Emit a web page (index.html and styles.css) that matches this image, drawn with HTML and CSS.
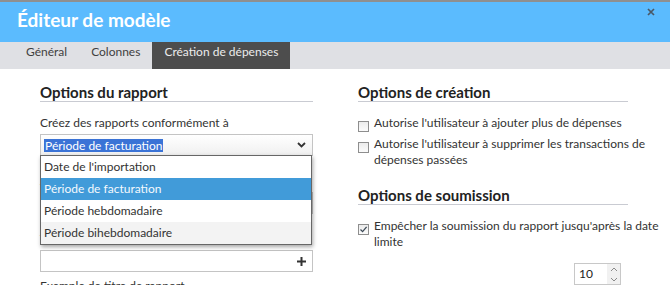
FILE: index.html
```html
<!DOCTYPE html>
<html lang="fr">
<head>
    <meta charset="UTF-8">
    <title>Éditeur de modèle</title>
    <link rel="stylesheet" href="styles.css">
</head>
<body>
    <div class="dialog">
        <div class="titlebar">
            <h1>Éditeur de modèle</h1>
            <button class="close" type="button">
                <svg width="8" height="8" viewBox="0 0 8 8"><path d="M1 1 L7 7 M7 1 L1 7" stroke="#4a5866" stroke-width="1.7"/></svg>
            </button>
        </div>
        <div class="tabs">
            <span class="tab">Général</span>
            <span class="tab">Colonnes</span>
            <span class="tab active">Création de dépenses</span>
        </div>
        <div class="content">
            <div class="col col-left">
                <h2>Options du rapport</h2>
                <div class="field">
                    <label class="field-label">Créez des rapports conformément à</label>
                    <div class="select-wrap">
                        <div class="select">
                            <span class="sel-text">Période de facturation</span>
                            <svg width="9" height="6" viewBox="0 0 9 6"><path d="M1 1 L4.5 4.5 L8 1" fill="none" stroke="#333" stroke-width="1.8"/></svg>
                        </div>
                        <ul class="dropdown">
                            <li>Date de l'importation</li>
                            <li class="active">Période de facturation</li>
                            <li>Période hebdomadaire</li>
                            <li class="alt">Période bihebdomadaire</li>
                        </ul>
                    </div>
                </div>
                <div class="field">
                    <label class="field-label">Jour de début de la période</label>
                    <div class="select"><span>Lundi</span></div>
                </div>
                <div class="field">
                    <label class="field-label">Titre du rapport</label>
                    <div class="input-plus">
                        <svg width="9" height="9" viewBox="0 0 9 9"><path d="M4.5 0 V9 M0 4.5 H9" stroke="#333" stroke-width="2"/></svg>
                    </div>
                </div>
                <div class="field example">
                    <label class="field-label">Exemple de titre de rapport</label>
                </div>
            </div>
            <div class="col col-right">
                <h2>Options de création</h2>
                <div class="check">
                    <span class="box"></span>
                    <span>Autorise l'utilisateur à ajouter plus de dépenses</span>
                </div>
                <div class="check">
                    <span class="box"></span>
                    <span>Autorise l'utilisateur à supprimer les transactions de dépenses passées</span>
                </div>
                <h2 class="section-2">Options de soumission</h2>
                <div class="check">
                    <span class="box checked">
                        <svg width="9" height="9" viewBox="0 0 9 9"><path d="M1.5 4.5 L3.6 6.6 L7.6 1.8" fill="none" stroke="#3d4a57" stroke-width="1.3"/></svg>
                    </span>
                    <span>Empêcher la soumission du rapport jusqu'après la date limite</span>
                </div>
                <div class="spin">
                    <span class="spin-value">10</span>
                    <span class="spin-arrows">
                        <svg width="8" height="5" viewBox="0 0 8 5"><path d="M1 4 L4 1 L7 4" fill="none" stroke="#8a8a8a" stroke-width="1"/></svg>
                        <svg width="8" height="5" viewBox="0 0 8 5"><path d="M1 1 L4 4 L7 1" fill="none" stroke="#8a8a8a" stroke-width="1"/></svg>
                    </span>
                </div>
            </div>
        </div>
    </div>
</body>
</html>
```

FILE: styles.css
```css
body {
    margin: 0;
    font-family: Lato, "Open Sans", sans-serif;
    font-size: 12px;
    color: #333;
    background-color: #fff;
}
.dialog {
    width: 670px;
    height: 285px;
    overflow: hidden;
}
.titlebar {
    display: flex;
    justify-content: space-between;
    height: 40px;
    background-color: #5bbbfe;
    border-top: 2px solid #8f8f8f;
}
.titlebar h1 {
    margin: 0 0 0 17px;
    font-size: 19px;
    line-height: 36px;
    font-weight: 700;
    color: #fff;
}
.close {
    display: block;
    width: 8px;
    height: 8px;
    margin: 6px 15px 0 0;
    padding: 0;
    border: none;
    background: none;
}
.close svg {
    display: block;
}
.tabs {
    display: flex;
    height: 27px;
    padding-left: 14px;
    background-color: #dfe0e4;
}
.tab {
    padding: 0 12px;
    line-height: 20px;
    color: #3f3f3f;
}
.tab.active {
    background-color: #4d4d4d;
    color: #ececec;
}
.content {
    display: flex;
    gap: 45px;
    padding: 14px 0 0 40px;
}
.col-left {
    width: 273px;
}
.col-right {
    width: 302px;
}
h2 {
    margin: 0;
    font-size: 15px;
    line-height: 18px;
    font-weight: 700;
    color: #222;
    border-bottom: 1px solid #c9cbd2;
}
.col-right h2 {
    margin-right: 32px;
}
.col-right h2.section-2 {
    margin-top: 18px;
}
.field-label {
    display: block;
    line-height: 16px;
}
.field {
    margin-top: 13px;
}
.field + .field {
    margin-top: 17px;
}
.field.example {
    margin-top: 6px;
}
.select-wrap {
    position: relative;
}
.select, .input-plus {
    display: flex;
    align-items: center;
    justify-content: space-between;
    box-sizing: border-box;
    height: 22px;
    margin-top: 3px;
    padding: 0 6px 0 3px;
    border: 1px solid #c4c4c4;
    background: linear-gradient(#fff, #f0f0f0);
}
.input-plus {
    justify-content: flex-end;
    background: #fff;
    padding-right: 6px;
}
.sel-text {
    padding: 0 1px;
    line-height: 13px;
    background-color: #3a73d6;
    color: #fff;
}
.dropdown {
    position: absolute;
    top: 21px;
    left: 0;
    right: 1px;
    z-index: 2;
    margin: 0;
    padding: 0;
    list-style: none;
    border: 1px solid #676767;
    background-color: #fff;
    box-shadow: 1px 2px 4px rgba(0, 0, 0, 0.35);
}
.dropdown li {
    height: 22px;
    line-height: 22px;
    padding-left: 3px;
}
.dropdown li.active {
    background-color: #419bd9;
    color: #f4f9fd;
}
.dropdown li.alt {
    background-color: #f3f3f3;
}
.check {
    display: flex;
    align-items: flex-start;
    margin-top: 13px;
    line-height: 16px;
}
.check + .check {
    margin-top: 4px;
}
.box {
    flex: none;
    display: flex;
    align-items: center;
    justify-content: center;
    box-sizing: border-box;
    width: 11px;
    height: 11px;
    margin: 6px 5px 0 0;
    border: 1px solid #8e8e8e;
    background: linear-gradient(#ececec, #fbfbfb);
}
.box svg {
    display: block;
}
.spin {
    display: flex;
    box-sizing: border-box;
    width: 47px;
    height: 22px;
    margin: 13px 0 0 216px;
    border: 1px solid #c8c8c8;
    background-color: #fff;
}
.spin-value {
    flex: 1;
    padding-left: 4px;
    line-height: 20px;
    color: #222;
}
.spin-arrows {
    display: flex;
    flex-direction: column;
    justify-content: space-around;
    align-items: center;
    width: 13px;
    background-color: #f1f1f1;
}
.spin-arrows svg {
    display: block;
}
```
